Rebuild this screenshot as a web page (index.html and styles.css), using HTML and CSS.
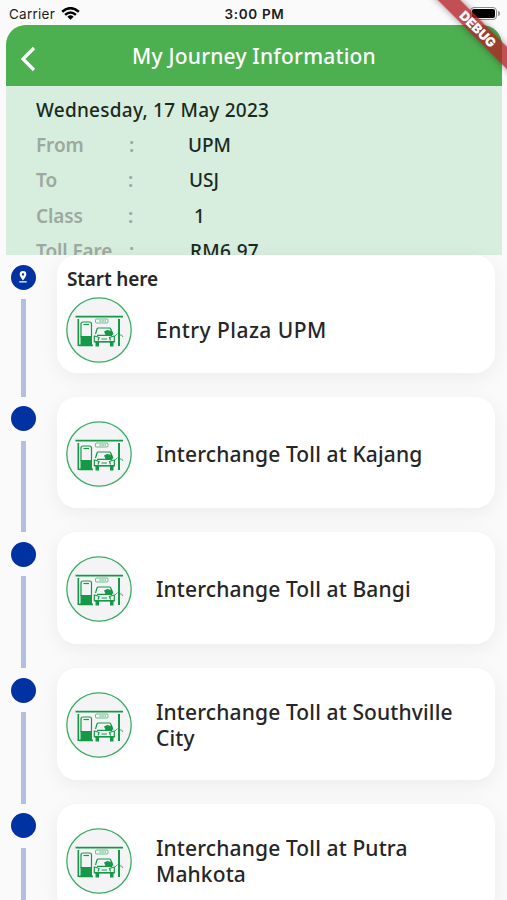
FILE: index.html
```
<!DOCTYPE html>
<html lang="en">

<head>
    <meta charset="UTF-8">
    <meta name="viewport" content="width=device-width, initial-scale=1.0">
    <title>My Journey Information</title>
    <link rel="stylesheet" href="styles.css">
</head>
<body>
    <!-- shared toll plaza icon -->
    <svg class="sprite" aria-hidden="true">
        <symbol id="toll" viewBox="0 0 66 66">
            <circle cx="33" cy="33" r="32.2" fill="#f4f4f6" stroke="#38ac63" stroke-width="1.3"/>
            <g fill="#159947">
                <path d="M9.500 18.800h47.500v1.800H9.500zM11.500 22h1.600v27h-1.600zM52 22h2v27h-2z"/>
                <path d="M13 47.500h14v1.800H13zM14.500 39h11.500v8.500H14.500z"/>
                <path d="M28.500 44h20v1.500h-20zM29.500 45h3.500v4.500h-3.500zM44 45h3.500v4.500H44zM38 34.500l3-1.500 5 1 1 3.500-3 1.500h-4z"/>
            </g>
            <g fill="none" stroke="#159947" stroke-width="1.200">
                <path d="M15 40V27q0-2 2-2h6.500q2 0 2 2v13"/>
                <path d="M17.500 27.500h5.500"/>
                <path d="M29.500 37l1.500-5q.3-1 1.300-1H43.500q1 0 1.300 1l2.200 5.500M31 38.300h15M28.300 38.500v6.200h20v-6.200M29 39l4 1.500-1 3M47.500 39l-4 1.500 1 3M35.500 42h5.500"/>
                <path d="M48 40l3.500-3.500m2 1.500h2l1.500 2" stroke-width=".8"/>
                <rect x="29.500" y="22" width="12.500" height="4" rx="1" stroke-width=".6"/>
                <path d="M33.500 24h2m1.500-.8v1.600m1.500-.8h1.500" stroke-width=".8"/>
            </g>
        </symbol>
    </svg>

    <div class="status-bar">
        <div class="carrier">
            <span>Carrier</span>
            <svg class="wifi" viewBox="0 0 20 14">
                <path d="M1.2 4.9Q10-2.7 18.8 4.9" />
                <path d="M4.3 8.2Q10 3.3 15.7 8.2" />
                <path class="wifi-dot" d="M6.7 10.1Q10 7.3 13.3 10.1L10 13.4z" />
            </svg>
        </div>
        <span class="time">3:00 PM</span>
        <div class="battery-wrap">
            <div class="battery"></div>
            <div class="battery-tip"></div>
        </div>
    </div>

    <div class="page">
        <header class="app-bar">
            <svg class="back" viewBox="0 0 16 26"><path d="M14 2L3 13l11 11"/></svg>
            <h1>My Journey Information</h1>
        </header>

        <section class="summary">
            <p class="date">Wednesday, 17 May 2023</p>
            <div class="detail">
                <span class="label">From</span><span class="colon">:</span><span class="value">UPM</span>
            </div>
            <div class="detail to-row">
                <span class="label">To</span><span class="colon">:</span><span class="value">USJ</span>
            </div>
            <div class="detail class-row">
                <span class="label">Class</span><span class="colon">:</span><span class="value">1</span>
            </div>
            <div class="detail fare-row">
                <span class="label">Toll Fare</span><span class="colon">:</span><span class="value">RM6.97</span>
            </div>
        </section>
    </div>

    <main class="timeline">
        <div class="stop first">
            <div class="rail">
                <div class="dot">
                    <svg viewBox="0 0 12 14"><path fill-rule="evenodd" d="M6 1a3.300 3.300 0 0 0-3.300 3.300C2.700 6.700 6 10.400 6 10.400s3.300-3.700 3.300-6.100A3.300 3.300 0 0 0 6 1zm0 2.200a1.200 1.200 0 1 1 0 2.400 1.200 1.200 0 0 1 0-2.400zM2.300 11.200h7.400v1.300H2.300z"/></svg>
                </div>
                <div class="line"></div>
            </div>
            <div class="card">
                <h2>Start here</h2>
                <div class="place">
                    <svg class="toll"><use href="#toll"/></svg>
                    <p class="plaza">Entry Plaza UPM</p>
                </div>
            </div>
        </div>
        <div class="stop">
            <div class="rail"><div class="dot"></div><div class="line"></div></div>
            <div class="card">
                <div class="place">
                    <svg class="toll"><use href="#toll"/></svg>
                    <p>Interchange Toll at Kajang</p>
                </div>
            </div>
        </div>
        <div class="stop">
            <div class="rail"><div class="dot"></div><div class="line"></div></div>
            <div class="card">
                <div class="place">
                    <svg class="toll"><use href="#toll"/></svg>
                    <p>Interchange Toll at Bangi</p>
                </div>
            </div>
        </div>
        <div class="stop">
            <div class="rail"><div class="dot"></div><div class="line"></div></div>
            <div class="card">
                <div class="place">
                    <svg class="toll"><use href="#toll"/></svg>
                    <p>Interchange Toll at Southville City</p>
                </div>
            </div>
        </div>
        <div class="stop">
            <div class="rail"><div class="dot"></div><div class="line"></div></div>
            <div class="card">
                <div class="place">
                    <svg class="toll"><use href="#toll"/></svg>
                    <p>Interchange Toll at Putra Mahkota</p>
                </div>
            </div>
        </div>
    </main>

    <div class="debug-banner">DEBUG</div>
</body>
</html>
```

FILE: styles.css
```
* { box-sizing: border-box; }
body {
    margin: 0;
    height: 900px;
    position: relative;
    overflow: hidden;
    background: #fafafa;
    color: #262626;
    font-family: 'Noto Sans', sans-serif;
    font-weight: 500;
}
h1, h2, p { margin: 0; }

.sprite {
    position: absolute;
    width: 0;
    height: 0;
}

/* status bar */
.status-bar {
    height: 25px;
    padding: 2px 7px 0 9px;
    display: grid;
    grid-template-columns: 1fr auto 1fr;
    align-items: center;
    font-family: Inter, sans-serif;
    font-size: 13.5px;
    line-height: 20px;
    color: #1c1c1c;
}
.carrier {
    display: flex;
    align-items: center;
    gap: 6px;
    font-weight: 400;
    letter-spacing: 0.25px;
}
.wifi {
    width: 19px;
    height: 13.5px;
    fill: none;
    stroke: #000;
    stroke-width: 2.6;
}
.wifi .wifi-dot {
    fill: #000;
    stroke: none;
}
.time {
    font-weight: 600;
    font-size: 13.5px;
    letter-spacing: 0.65px;
}
.battery-wrap {
    display: flex;
    align-items: center;
    justify-content: flex-end;
    gap: 1px;
}
.battery {
    width: 27px;
    height: 13px;
    border: 1px solid #8b8b8b;
    border-radius: 4px;
    background: #000;
    background-clip: content-box;
    padding: 1px;
}
.battery-tip {
    width: 2px;
    height: 5px;
    border-radius: 0 2px 2px 0;
    background: #9a9a9a;
}

/* header and trip summary */
.page {
    height: 230px;
    margin: 0 5px 0 6px;
    overflow: hidden;
    background: #d7eede;
    border-radius: 20px 20px 0 0;
}
.app-bar {
    height: 60.5px;
    padding: 0 14px;
    display: grid;
    grid-template-columns: 16px 1fr 16px;
    align-items: center;
    background: #4caf50;
    color: #fff;
}
.back {
    width: 16px;
    height: 26px;
    margin-top: 8px;
    fill: none;
    stroke: #fff;
    stroke-width: 3.2;
}
.app-bar h1 {
    padding-top: 1px;
    text-align: center;
    font-size: 21px;
    font-weight: 500;
    line-height: 28px;
    letter-spacing: 0.2px;
}
.summary {
    padding: 6px 30px 0;
    font-size: 19px;
    color: #1a2a20;
}
.date {
    height: 36px;
    line-height: 36px;
    letter-spacing: 0.25px;
}
.detail {
    height: 35.5px;
    line-height: 35px;
    display: grid;
    grid-template-columns: 93px 59px 1fr;
}
.label, .colon {
    color: #9da8a0;
    font-weight: 600;
}
.label { letter-spacing: -0.1px; }
.to-row, .class-row { grid-template-columns: 92px 61px 1fr; }
.class-row .value { padding-left: 5px; }
.fare-row { grid-template-columns: 93px 61px 1fr; }
.fare-row .value { letter-spacing: 0.3px; }

/* list of stops */
.timeline { padding-right: 12px; }
.stop {
    height: 135.7px;
    display: flex;
}
.stop.first { height: 141.8px; }
.rail {
    width: 46px;
    margin-right: 11px;
    padding-top: 9.5px;
    display: flex;
    flex-direction: column;
    align-items: center;
    gap: 9.5px;
}
.dot {
    width: 25px;
    height: 25px;
    flex-shrink: 0;
    display: flex;
    align-items: center;
    justify-content: center;
    border-radius: 50%;
    background: #0033a1;
}
.dot svg {
    width: 12px;
    height: 14px;
    fill: #fff;
}
.line {
    width: 5px;
    flex: 1;
    background: #b2bfe0;
}
.card {
    flex: 1;
    height: 111.5px;
    padding: 2px 9px 0;
    display: flex;
    flex-direction: column;
    justify-content: center;
    background: #fff;
    border-radius: 20px;
    box-shadow: 0 5px 20px rgba(0, 0, 0, 0.06);
}
.first .card {
    height: 117.5px;
    padding-top: 0;
    justify-content: flex-start;
}
.card h2 {
    height: 42px;
    padding: 10px 0 0 1px;
    font-size: 19px;
    font-weight: 600;
    line-height: 28px;
    letter-spacing: -0.15px;
}
.place {
    display: flex;
    align-items: center;
    gap: 24px;
}
.toll {
    width: 66px;
    height: 66px;
    flex-shrink: 0;
}
.place p {
    width: 305px;
    padding-top: 2px;
    font-size: 21px;
    line-height: 25.5px;
    letter-spacing: 0.13px;
}
.place .plaza { letter-spacing: 0.45px; }

/* corner ribbon */
.debug-banner {
    position: absolute;
    top: 21px;
    right: -31px;
    width: 120px;
    height: 16px;
    transform: rotate(45deg);
    background: rgba(175, 32, 36, 0.78);
    box-shadow: 0 0 7px rgba(0, 0, 0, 0.4);
    color: #fff;
    font-family: Inter, sans-serif;
    font-size: 13px;
    font-weight: 900;
    line-height: 16px;
    text-align: center;
}
```
